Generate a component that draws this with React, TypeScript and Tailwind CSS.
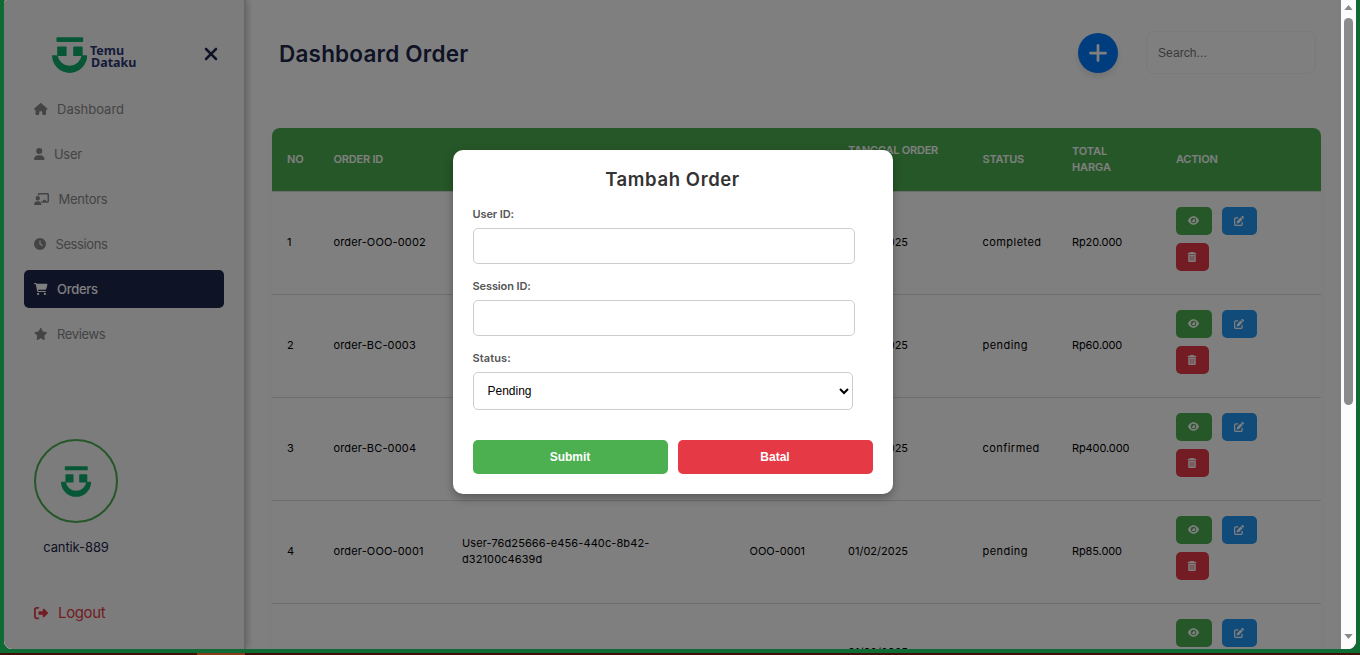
import React from "react";
import {
  FaHouse, FaUser, FaChalkboardUser, FaClock, FaCartShopping, FaStar,
  FaRightFromBracket, FaXmark, FaPlus, FaEye, FaPenToSquare, FaTrashCan,
} from "react-icons/fa6";

function Face({ className }: { className: string }) {
  return (
    <svg viewBox="0 0 34 35" className={className} fill="#0fae6e">
      <rect x="4.3" y="0.3" width="26" height="4.5" rx="1" />
      <rect x="5" y="9.3" width="9.2" height="9.2" rx="0.8" />
      <rect x="20.6" y="9.3" width="9.2" height="9.2" rx="0.8" />
      <path d="M0 17.8H5.4A11.8 11.8 0 0 0 28.8 17.8H34.2A17.1 17.1 0 0 1 0 17.8Z" />
    </svg>
  );
}

const nav = [
  { icon: FaHouse, label: "Dashboard", size: "w-[13.5px]", gap: "ml-[9.5px]", track: "tracking-[0px]" },
  { icon: FaUser, label: "User", size: "w-[10.5px]", gap: "ml-[9.5px]", track: "tracking-[-0.3px]" },
  { icon: FaChalkboardUser, label: "Mentors", size: "w-[15px]", gap: "ml-[9.5px]", track: "tracking-[-0.25px]" },
  { icon: FaClock, label: "Sessions", size: "w-[12px]", gap: "ml-[9.5px]", track: "tracking-[-0.4px]" },
  { icon: FaCartShopping, label: "Orders", size: "w-[13.5px]", gap: "ml-[9.5px]", track: "tracking-[-0.3px]", active: true },
  { icon: FaStar, label: "Reviews", size: "w-[13.5px]", gap: "ml-[9.5px]", track: "tracking-[-0.35px]" },
];

const rows = [
  { no: 1, id: "order-OOO-0002", user: "", session: "", date: "01/02/2025", status: "completed", total: "Rp20.000" },
  { no: 2, id: "order-BC-0003", user: "", session: "", date: "01/02/2025", status: "pending", total: "Rp60.000" },
  { no: 3, id: "order-BC-0004", user: "", session: "", date: "01/02/2025", status: "confirmed", total: "Rp400.000" },
  { no: 4, id: "order-OOO-0001", user: "User-76d25666-e456-440c-8b42-d32100c4639d", session: "OOO-0001", date: "01/02/2025", status: "pending", total: "Rp85.000" },
  { no: "", id: "", user: "", session: "", date: "01/02/2025", status: "", total: "" },
];

const cols = "grid grid-cols-[46.5px_128.5px_287.5px_98.5px_134.5px_89.5px_104px_160px] items-center";

function Sidebar() {
  return (
    <aside className="z-10 -mr-px flex w-[242px] shrink-0 flex-col border-r-2 border-[#d0d0d0] bg-[#f9f9f9] shadow-[2px_0_6px_rgba(0,0,0,0.2)]">
      <div className="flex h-[86px] shrink-0 items-start pl-[48px] pt-[37px]">
        <Face className="h-[36px] w-[35px]" />
        <div className="ml-[3px] mt-[8px] w-[111px] font-['Noto_Sans','Open_Sans',sans-serif] text-[12.5px] font-bold leading-[11.5px] text-[#2b3674]">
          <div>Temu</div>
          <div className="pl-[1px]">Dataku</div>
        </div>
        <FaXmark className="mt-[7px] h-5 w-5 text-[#1d274d]" />
      </div>
      <nav className="flex flex-col gap-[7px] px-5 pt-1">
        {nav.map(({ icon: Icon, label, size, gap, track, active }) => (
          <div key={label} className={`flex h-[38px] items-center rounded-[5px] pl-[10px] text-[13px] ${active ? "bg-[#1d274d] text-white" : "text-[#888]"}`}>
            <Icon className={`h-[12px] shrink-0 ${size}`} />
            <span className={`pt-px ${gap} ${track} ${active ? "font-medium" : ""}`}>{label}</span>
          </div>
        ))}
      </nav>
      <div className="mt-[86px] flex w-[144px] flex-col items-center">
        <div className="flex size-[84px] items-center justify-center rounded-full border-2 border-[#4caf50]">
          <Face className="h-[31px] w-[30px]" />
        </div>
        <span className="mt-[14px] text-[13px] leading-5 tracking-[-0.1px] text-[#1d274d]">cantik-889</span>
      </div>
      <div className="mt-[46px] flex items-center pl-[30px] text-[15px] leading-5 text-[#e63946]">
        <FaRightFromBracket className="size-[14px]" />
        <span className="ml-[10px] tracking-[-0.35px]">Logout</span>
      </div>
    </aside>
  );
}

function Header() {
  return (
    <header className="mr-[9px] flex h-[108px] items-center border-b border-[#fbfbfb] pb-[2px] pl-[34px]">
      <h1 className="pt-[2px] text-[22.5px] font-semibold tracking-[0.2px] text-[#1d274d]">Dashboard Order</h1>
      <button className="ml-auto mr-[28px] flex size-10 items-center justify-center rounded-full bg-[#007bff] text-white shadow-[0_4px_6px_rgba(0,0,0,0.1)]">
        <FaPlus className="size-[22px]" />
      </button>
      <input placeholder="Search..." className="mr-[16px] h-[43px] w-[170px] rounded-lg border border-[#f5f5f5] bg-white px-[11px] font-['Liberation_Sans',Arial,sans-serif] text-[12px] tracking-[0.1px] placeholder:text-[#757575]" />
    </header>
  );
}

function OrderTable() {
  return (
    <section className="ml-[27px] mt-[20px] w-[1049px] rounded-[10px] text-[11px] leading-4 shadow-[0_4px_8px_rgba(0,0,0,0.05)]">
      <div className={`${cols} h-[64px] rounded-t-[8px] border-b border-[#ddd] bg-[#4caf50] pb-[2px] pl-[15px] font-semibold text-white`}>
        <span>NO</span>
        <span className="tracking-[-0.2px]">ORDER ID</span>
        <span>USER ID</span>
        <span>SESSION ID</span>
        <span className="-mt-[18px] tracking-[-0.25px]">TANGGAL ORDER</span>
        <span className="tracking-[-0.25px]">STATUS</span>
        <span className="tracking-[-0.1px]">TOTAL<br />HARGA</span>
        <span className="tracking-[-0.2px]">ACTION</span>
      </div>
      {rows.map((r, i) => (
        <div key={i} className={`${cols} h-[103px] border-b border-[#ddd] pb-[2px] pl-[15px] text-black`}>
          <span>{r.no}</span>
          <span className="tracking-[0.15px]">{r.id}</span>
          <span className="w-[200px] break-words tracking-[0.1px]">{r.user}</span>
          <span>{r.session}</span>
          <span className={i === 4 ? "pb-1" : ""}>{r.date}</span>
          <span className="tracking-[0.45px]">{r.status}</span>
          <span className="tracking-[-0.1px]">{r.total}</span>
          <div className="flex h-[71px] flex-wrap content-start gap-x-[10px] gap-y-2 pr-[60px] text-white">
            <button className="flex h-7 w-9 items-center justify-center rounded-[5px] bg-[#4caf50] pr-px"><FaEye className="size-[11px]" /></button>
            <button className="flex h-7 w-[35px] items-center justify-center rounded-[5px] bg-[#2196f3] pr-px"><FaPenToSquare className="size-[10px]" /></button>
            <button className="flex h-7 w-[33px] items-center justify-center rounded-[5px] bg-[#e63946] pr-px"><FaTrashCan className="size-[10px]" /></button>
          </div>
        </div>
      ))}
    </section>
  );
}

function OrderDialog() {
  return (
    <div className="h-[344px] w-[440px] rounded-[10px] bg-white px-5 pt-[15px] shadow-[0_4px_10px_rgba(0,0,0,0.3)]">
      <h2 className="text-center text-[18.5px] font-semibold leading-7 tracking-[0.6px] text-[#333]">Tambah Order</h2>
      <div className="mt-[13px] flex flex-col gap-[14px] text-[11px] font-semibold leading-4 tracking-[-0.1px] text-[#555]">
        <label className="flex flex-col gap-[6px]">
          <span>User ID:</span>
          <input className="h-9 w-[382px] rounded-[5px] border border-[#ccc]" />
        </label>
        <label className="flex flex-col gap-[6px]">
          <span>Session ID:</span>
          <input className="h-9 w-[382px] rounded-[5px] border border-[#ccc]" />
        </label>
        <label className="flex flex-col gap-[6px]">
          <span className="tracking-[0.1px]">Status:</span>
          <select className="h-[38px] w-[380px] rounded-[5px] border border-[#ccc] bg-white px-[10px] font-['Liberation_Sans',Arial,sans-serif] text-[12px] font-normal tracking-normal text-black">
            <option>Pending</option>
          </select>
        </label>
      </div>
      <div className="mt-[30px] flex gap-[10px] font-['Liberation_Sans',Arial,sans-serif] text-[12px] font-bold text-white">
        <button className="h-[34px] flex-1 rounded-[5px] bg-[#4caf50]">Submit</button>
        <button className="h-[34px] flex-1 rounded-[5px] bg-[#e63946]">Batal</button>
      </div>
    </div>
  );
}

export default function App() {
  return (
    <div className="flex h-[655px] w-[1360px] flex-col overflow-hidden bg-[#0f6a34] font-['Inter','Open_Sans',sans-serif]">
      <div className="mx-1 flex h-[649px] overflow-hidden rounded-b-[8px] rounded-tl-[3px] bg-white">
        <div className="relative flex h-full w-[1337px] overflow-hidden">
          <Sidebar />
          <main className="min-w-0 flex-1 overflow-hidden bg-white">
            <Header />
            <OrderTable />
          </main>
          <div className="absolute inset-0 z-20 flex items-start justify-center bg-black/50 pt-[150px]">
            <OrderDialog />
          </div>
        </div>
        <div className="flex w-[15px] flex-col items-center bg-[#fcfcfc]">
          <svg viewBox="0 0 10 6" className="mt-[5px] h-[5px] w-[9px] shrink-0" fill="#8a8a8a"><path d="M5 0L10 6H0Z" /></svg>
          <div className="mt-2 h-[387px] w-[9px] shrink-0 rounded-full bg-[#8b8b8b]" />
          <svg viewBox="0 0 10 6" className="mb-[10px] mt-auto h-[5px] w-[9px] shrink-0" fill="#8a8a8a"><path d="M0 0H10L5 6Z" /></svg>
        </div>
      </div>
      <div className="mt-auto h-[2px] bg-[#3f1208] pl-[197px]">
        <div className="h-full w-12 bg-[#8b3a1c]" />
      </div>
    </div>
  );
}
